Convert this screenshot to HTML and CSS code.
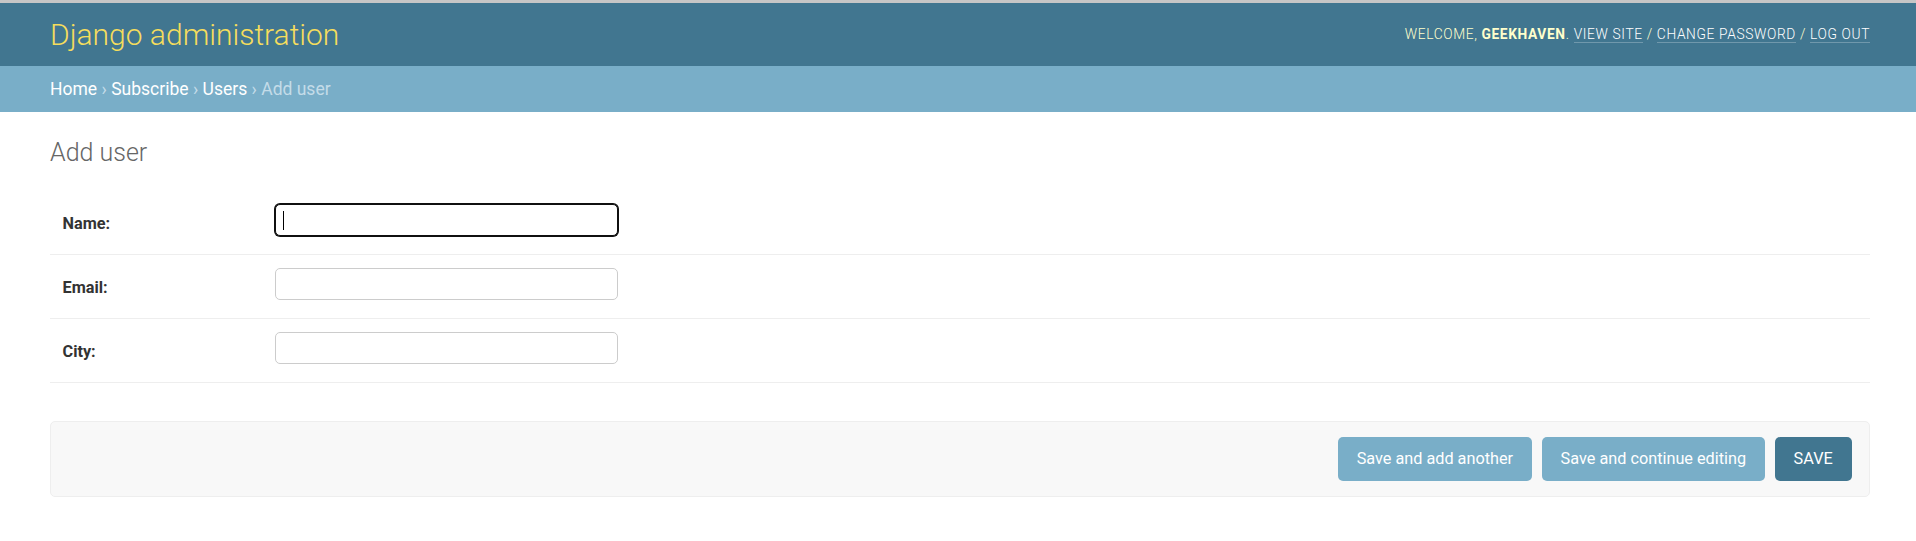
FILE: index.html
```html
<!DOCTYPE html>
<html lang="en">
<head>
<meta charset="utf-8">
<title>Add user | Django site admin</title>
<link rel="stylesheet" href="styles.css">
</head>
<body>
<div class="top-rule"></div>
<header class="header">
  <h1 class="branding">Django administration</h1>
  <div class="user-tools">Welcome, <strong class="username">geekhaven</strong>. <a href="#" class="tool-link">View site</a> / <a href="#" class="tool-link">Change password</a> / <a href="#" class="tool-link">Log out</a></div>
</header>
<nav class="breadcrumbs"><a href="#" class="crumb">Home</a><span class="sep">›</span><a href="#" class="crumb">Subscribe</a><span class="sep">›</span><a href="#" class="crumb">Users</a><span class="sep">›</span><span class="current">Add user</span></nav>
<main class="content">
  <h1 class="page-title">Add user</h1>
  <form class="user-form">
    <fieldset class="module">
      <div class="form-row">
        <label class="field-label" for="id_name">Name:</label>
        <div class="field-input focused"><input class="text-input is-focused" type="text" id="id_name"></div>
      </div>
      <div class="form-row">
        <label class="field-label" for="id_email">Email:</label>
        <div class="field-input"><input class="text-input" type="email" id="id_email"></div>
      </div>
      <div class="form-row">
        <label class="field-label" for="id_city">City:</label>
        <div class="field-input"><input class="text-input" type="text" id="id_city"></div>
      </div>
    </fieldset>
    <div class="submit-row">
      <button type="button" class="btn">Save and add another</button>
      <button type="button" class="btn">Save and continue editing</button>
      <button type="button" class="btn btn-default">Save</button>
    </div>
  </form>
</main>
</body>
</html>
```
FILE: styles.css
```css
* { box-sizing: border-box; }
html, body { margin: 0; padding: 0; }
body {
  font-family: Roboto, "Liberation Sans", Arial, sans-serif;
  color: #333;
  background: #fff;
  width: 1916px;
}
.top-rule {
  height: 3px;
  background: #c6c6c6;
}
.header {
  display: flex;
  justify-content: space-between;
  align-items: center;
  height: 63px;
  padding: 0 46px 0 50px;
  background: #417690;
}
.branding {
  margin: 0;
  font-size: 30px;
  line-height: 38px;
  font-weight: 300;
  color: #f5dd5d;
  margin-top: 1px;
}
.user-tools {
  font-size: 13.75px;
  letter-spacing: 0.64px;
  text-transform: uppercase;
  font-weight: 300;
  color: #ffc;
  line-height: 18px;
  margin-top: -1px;
}
.username { font-weight: 700; }
.tool-link {
  color: #fff;
  text-decoration: none;
  border-bottom: 1px solid rgba(255,255,255,0.25);
}
.breadcrumbs {
  height: 46px;
  line-height: 46px;
  padding: 0 46px 0 50px;
  background: #79aec8;
  color: #c4dce8;
  font-size: 17.5px;
}
.crumb { color: #fff; text-decoration: none; }
.sep { margin: 0 4.4px; font-size: 17.5px; }
.current { color: #c4dce8; }
.content {
  padding: 25px 46px 0 50px;
}
.page-title {
  margin: 0 0 23px;
  font-size: 25px;
  line-height: 31px;
  font-weight: 300;
  color: #666;
}
.user-form { margin: 0; }
.module {
  margin: 0 0 37.5px;
  padding: 0;
  border: none;
}
.form-row {
  display: flex;
  align-items: flex-start;
  padding: 12.5px 12.5px 18px;
  border-bottom: 1px solid #eee;
  font-size: 16.25px;
}
.field-label {
  width: 212.5px;
  flex: none;
  padding-top: 10.5px;
  line-height: 20px;
  font-weight: 700;
  color: #333;
}
.field-input { position: relative; }
.text-input {
  display: block;
  width: 343px;
  height: 32.5px;
  margin: 0;
  padding: 6px 7.5px;
  border: 1px solid #ccc;
  border-radius: 5px;
  font-family: inherit;
  font-size: 16.25px;
  color: #333;
  background: #fff;
  outline: none;
}
.text-input.is-focused {
  border-color: #101010;
  box-shadow: 0 0 0 1px #101010;
}
.field-input.focused::after {
  content: "";
  position: absolute;
  left: 8px;
  top: 7px;
  width: 1px;
  height: 19px;
  background: #000;
}
.submit-row {
  display: flex;
  justify-content: flex-end;
  gap: 10px;
  padding: 15px 17.5px;
  background: #f8f8f8;
  border: 1px solid #eee;
  border-radius: 5px;
}
.btn {
  height: 44px;
  padding: 0 18.75px;
  border: none;
  border-radius: 5px;
  background: #79aec8;
  color: #fff;
  font-family: inherit;
  font-size: 16.25px;
  cursor: pointer;
}
.btn-default {
  background: #417690;
  text-transform: uppercase;
}
```
